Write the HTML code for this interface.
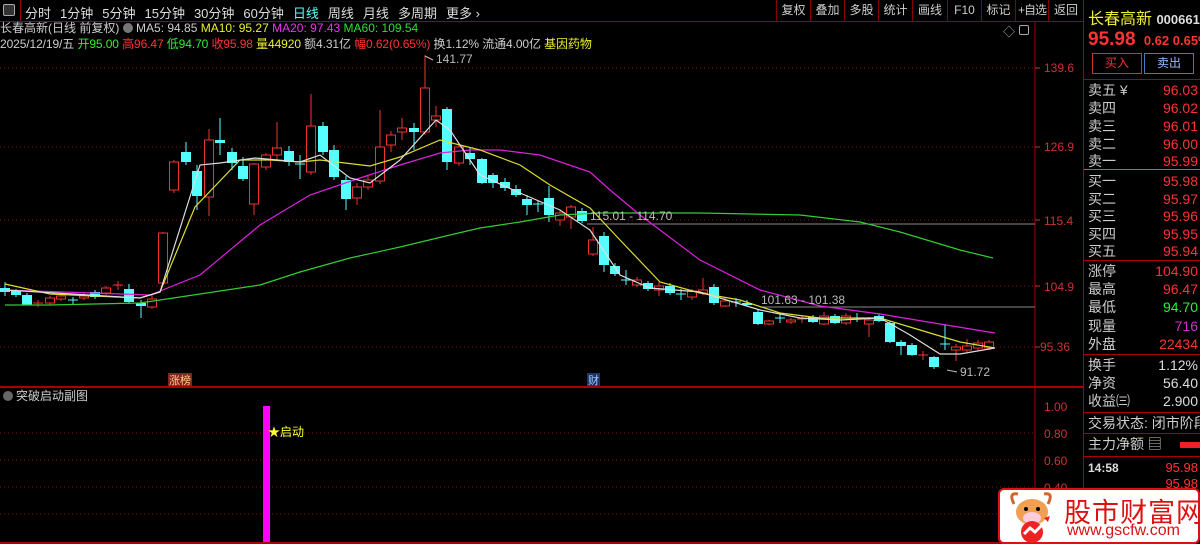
<!DOCTYPE html>
<html><head><meta charset="utf-8"><style>
*{margin:0;padding:0;box-sizing:border-box}
body{width:1200px;height:544px;background:#000;overflow:hidden;position:relative;font-family:"Liberation Sans","Noto Sans CJK SC",sans-serif;font-size:12px;color:#ccc}
.a{position:absolute;white-space:nowrap}
.tb span{margin-right:9px}
.btn{position:absolute;top:0;height:22px;border-left:1px solid #800;color:#ccc;font-size:12px;line-height:20px;text-align:center;white-space:nowrap;overflow:hidden}
.rp{position:absolute;left:1083px;top:0;width:117px;height:544px;border-left:1px solid #a00}
.row{position:absolute;left:4px;width:112px;font-size:14px;height:18px;line-height:18px}
.row b{position:absolute;right:2px;font-weight:normal;font-family:"Liberation Sans",sans-serif}
.sep{position:absolute;left:0;width:117px;height:1px;background:#a00}
</style></head><body>
<div class="a" style="left:0;top:0;width:1083px;height:22px;border-bottom:1px solid #900"></div>
<div class="a" style="left:3px;top:4px;width:12px;height:12px;border:1px solid #aaa;border-radius:2px;background:#333"></div>
<div class="a" style="left:20px;top:0;width:1px;height:22px;background:#900"></div>
<div class="a tb" style="left:25px;top:3px;font-size:13px;color:#ddd"><span>分时</span><span>1分钟</span><span>5分钟</span><span>15分钟</span><span>30分钟</span><span>60分钟</span><span style="color:#5ff">日线</span><span>周线</span><span>月线</span><span>多周期</span><span>更多 ›</span></div>
<div class="btn" style="left:776px;width:34px">复权</div>
<div class="btn" style="left:810px;width:34px">叠加</div>
<div class="btn" style="left:844px;width:34px">多股</div>
<div class="btn" style="left:878px;width:34px">统计</div>
<div class="btn" style="left:912px;width:35px">画线</div>
<div class="btn" style="left:947px;width:34px">F10</div>
<div class="btn" style="left:981px;width:34px">标记</div>
<div class="btn" style="left:1015px;width:33px;letter-spacing:-1px">+自选</div>
<div class="btn" style="left:1048px;width:35px">返回</div>
<div class="a" style="left:0;top:19px;font-size:12px"><span>长春高新(日线 前复权)</span> <span style="display:inline-block;width:10px;height:10px;border-radius:5px;background:#777;vertical-align:-1px"></span> <span>MA5: 94.85</span> <span style="color:#ee3">MA10: 95.27</span> <span style="color:#e3e">MA20: 97.43</span> <span style="color:#3d3">MA60: 109.54</span></div>
<div class="a" style="left:0;top:35px;font-size:12px;letter-spacing:-0.1px">2025/12/19/五 <span style="color:#3e3">开95.00</span> <span style="color:#f33">高96.47</span> <span style="color:#3e3">低94.70</span> <span style="color:#f33">收95.98</span> <span style="color:#ee3">量44920</span> 额4.31亿 <span style="color:#f33">幅0.62(0.65%)</span> 换1.12% 流通4.00亿 <span style="color:#ee3">基因药物</span></div>
<div class="a" style="left:1003px;top:23px;color:#aaa;font-size:12px">◇</div>
<div class="a" style="left:1019px;top:25px;width:10px;height:10px;border:1px solid #aaa;border-radius:2px"></div>
<svg class="a" style="left:0;top:0" width="1083" height="544" id="ch">
<g stroke="#7a1a1a" stroke-dasharray="1,3" stroke-width="1">
<line x1="0" y1="68" x2="1035" y2="68"/><line x1="0" y1="147" x2="1035" y2="147"/><line x1="0" y1="220" x2="1035" y2="220"/><line x1="0" y1="286" x2="1035" y2="286"/><line x1="0" y1="347" x2="1035" y2="347"/>
<line x1="0" y1="433" x2="1035" y2="433"/><line x1="0" y1="460" x2="1035" y2="460"/><line x1="0" y1="487" x2="1035" y2="487"/><line x1="0" y1="514" x2="1035" y2="514"/>
</g>
<line x1="1035" y1="22" x2="1035" y2="544" stroke="#a00"/>
<line x1="0" y1="387" x2="1083" y2="387" stroke="#a00" stroke-width="2"/>
<line x1="0" y1="543" x2="1083" y2="543" stroke="#a00" stroke-width="2"/>
<line x1="587" y1="224" x2="1035" y2="224" stroke="#888"/>
<line x1="760" y1="307" x2="1035" y2="307" stroke="#888"/>
<g fill="#c33" font-size="12" font-family="Liberation Sans,sans-serif">
<text x="1044" y="72">139.6</text><text x="1044" y="151">126.9</text><text x="1044" y="225">115.4</text><text x="1044" y="291">104.9</text><text x="1040" y="351">95.36</text>
<text x="1044" y="411">1.00</text><text x="1044" y="438">0.80</text><text x="1044" y="465">0.60</text><text x="1044" y="492">0.40</text>
</g>
<g stroke="#c33"><line x1="1035" y1="68" x2="1040" y2="68"/><line x1="1035" y1="147" x2="1040" y2="147"/><line x1="1035" y1="220" x2="1040" y2="220"/><line x1="1035" y1="286" x2="1040" y2="286"/><line x1="1035" y1="347" x2="1040" y2="347"/></g>
<g id="cd"></g>
<g fill="none" stroke-width="1.2">
<polyline stroke="#3c3" points="5,305 50,305 140,303 160,300 260,285 300,272 350,258 400,247 450,235 480,228 520,222 560,215 600,213 700,213 800,215 860,222 900,232 960,250 993,258"/>
<polyline stroke="#d2d" points="5,290 150,295 200,275 260,225 310,195 360,178 400,165 440,153 470,150 500,150 540,155 590,172 610,190 640,215 700,260 760,290 820,306 880,314 940,324 995,333"/>
<polyline stroke="#dd3" points="5,284 50,294 140,298 160,292 195,207 240,160 270,160 300,162 320,160 370,166 400,157 440,140 480,150 520,165 550,185 590,208 620,240 660,282 700,293 740,300 780,313 820,318 880,318 920,330 960,342 995,348"/>
<polyline stroke="#ddd" points="5,290 140,298 160,292 200,165 220,163 255,158 300,162 320,155 350,178 370,183 400,160 436,120 450,130 480,175 520,193 560,210 590,230 620,275 650,288 700,292 760,310 800,318 840,320 880,318 910,335 940,354 960,354 995,348"/>
</g>
<g fill="#bbb" font-size="12" font-family="Liberation Sans,sans-serif">
<text x="436" y="63">141.77</text><text x="590" y="220">115.01 - 114.70</text><text x="761" y="304">101.63 - 101.38</text><text x="960" y="376">91.72</text>
</g>
<path d="M425 56 l8 4 M947 370 l10 2" stroke="#bbb" fill="none"/>
<rect x="168" y="373" width="24" height="13" fill="#822"/><text x="169" y="384" fill="#fc8" font-size="11">涨榜</text>
<rect x="587" y="373" width="13" height="13" fill="#236"/><text x="588" y="384" fill="#9cf" font-size="11">财</text>
<circle cx="8" cy="396" r="5" fill="#666"/>
<text x="16" y="400" fill="#ccc" font-size="12">突破启动副图</text>
<rect x="263" y="406" width="7" height="136" fill="#f0f"/>
<text x="268" y="436" fill="#ff3" font-size="12">★启动</text>
</svg>
<div class="rp">
<div class="a" style="left:4px;top:5px;font-size:16px;color:#ee3">长春高新 <span style="font-size:13px;color:#ddd;font-weight:bold">000661</span></div>
<div class="a" style="left:4px;top:29px;font-size:19px;color:#f33;font-weight:bold">95.98 <span style="font-size:13px;margin-left:3px">0.62 0.65%</span></div>
<div class="a" style="left:8px;top:53px;width:50px;height:21px;border:1px solid #c33;color:#e33;text-align:center;line-height:19px;font-size:12px">买入</div>
<div class="a" style="left:60px;top:53px;width:50px;height:21px;border:1px solid #47b;color:#9bf;text-align:center;line-height:19px;font-size:12px">卖出</div>
<div class="sep" style="top:79px"></div>
<div class="row" style="top:81px">卖五 ¥<b style="color:#f33">96.03</b></div>
<div class="row" style="top:99px">卖四<b style="color:#f33">96.02</b></div>
<div class="row" style="top:117px">卖三<b style="color:#f33">96.01</b></div>
<div class="row" style="top:135px">卖二<b style="color:#f33">96.00</b></div>
<div class="row" style="top:152px">卖一<b style="color:#f33">95.99</b></div>
<div class="sep" style="top:169px;background:#a65"></div>
<div class="row" style="top:172px">买一<b style="color:#f33">95.98</b></div>
<div class="row" style="top:190px">买二<b style="color:#f33">95.97</b></div>
<div class="row" style="top:207px">买三<b style="color:#f33">95.96</b></div>
<div class="row" style="top:225px">买四<b style="color:#f33">95.95</b></div>
<div class="row" style="top:242px">买五<b style="color:#f33">95.94</b></div>
<div class="sep" style="top:260px"></div>
<div class="row" style="top:262px">涨停<b style="color:#f33">104.90</b></div>
<div class="row" style="top:280px">最高<b style="color:#f33">96.47</b></div>
<div class="row" style="top:298px">最低<b style="color:#3e3">94.70</b></div>
<div class="row" style="top:317px">现量<b style="color:#c3c">716</b></div>
<div class="row" style="top:335px">外盘<b style="color:#f33">22434</b></div>
<div class="sep" style="top:354px"></div>
<div class="row" style="top:356px">换手<b style="color:#ddd">1.12%</b></div>
<div class="row" style="top:374px">净资<b style="color:#ddd">56.40</b></div>
<div class="row" style="top:392px">收益㈢<b style="color:#ddd">2.900</b></div>
<div class="sep" style="top:412px"></div>
<div class="row" style="top:414px;width:140px">交易状态: 闭市阶段</div>
<div class="sep" style="top:433px"></div>
<div class="row" style="top:435px">主力净额 ▤<span style="position:absolute;left:92px;top:7px;width:22px;height:6px;background:#e22"></span></div>
<div class="sep" style="top:456px"></div>
<div class="row" style="top:459px;font-size:12px;color:#ddd;font-weight:bold">14:58<b style="color:#f33;font-size:13px">95.98</b></div>
<div class="row" style="top:475px;font-size:13px"><b style="color:#f33">95.98</b></div>
</div>
<div class="a" style="left:998px;top:488px;width:202px;height:56px;background:#fff;border:2px solid #d11;border-radius:6px"></div>
<svg class="a" style="left:1004px;top:490px" width="56" height="54">
<path d="M10 14 q-6 -12 4 -10 M44 14 q6 -12 -4 -10" stroke="#c63" stroke-width="3" fill="none"/>
<ellipse cx="28" cy="22" rx="16" ry="13" fill="#f0a050"/>
<ellipse cx="28" cy="28" rx="9" ry="6" fill="#fcd"/>
<circle cx="22" cy="19" r="2" fill="#000"/><circle cx="34" cy="19" r="2" fill="#000"/>
<circle cx="28" cy="42" r="11" fill="#e22"/>
<path d="M20 44 l6 -6 l5 4 l12 -12" stroke="#fff" stroke-width="3" fill="none"/>
<path d="M40 28 l6 -2 l-2 6z" fill="#e22"/>
</svg>
<div class="a" style="left:1064px;top:491px;font-size:27px;color:#d11;letter-spacing:1px">股市财富网</div>
<div class="a" style="left:1067px;top:522px;font-size:16px;color:#d11;font-family:'Liberation Sans',sans-serif">www.gscfw.com</div>
<script>
var d=[[5,288,292,282,296,0],[16,291,295,289,297,0],[27,295,305,293,305,0],[38,303,304,300,307,2],[50,298,303,296,305,1],[61,296,299,294,301,1],[73,300,301,297,305,2],[84,296,298,293,300,1],[95,292,297,290,299,0],[106,288,293,286,295,1],[118,285,286,281,290,2],[129,289,302,284,304,0],[141,303,306,300,318,0],[152,299,307,294,309,1],[163,233,283,232,285,1],[174,162,190,160,193,1],[186,152,162,142,165,0],[197,171,196,165,210,0],[209,140,197,129,216,1],[220,140,143,118,155,0],[232,152,163,148,170,0],[243,166,179,157,181,0],[254,164,204,163,215,1],[266,155,167,153,170,1],[277,148,155,122,160,1],[289,151,162,146,166,0],[300,164,166,155,179,2],[311,126,172,94,175,1],[323,126,152,122,155,0],[334,150,177,145,180,0],[346,180,199,176,210,0],[357,187,198,183,205,1],[368,180,187,175,190,1],[380,147,181,110,184,1],[391,135,145,131,152,1],[402,128,132,118,140,1],[414,128,132,123,150,0],[425,88,132,55,135,1],[436,116,120,106,127,1],[447,109,162,107,170,0],[459,147,163,145,166,1],[470,153,159,147,165,0],[482,159,183,158,184,0],[493,175,183,173,188,0],[505,182,188,178,191,0],[516,189,195,185,197,0],[527,199,205,195,215,0],[538,204,206,200,212,2],[549,198,215,186,222,0],[560,213,220,210,226,1],[571,207,217,205,229,1],[582,211,221,208,223,0],[593,240,254,227,256,1],[604,236,265,232,272,0],[615,266,274,263,276,0],[626,280,282,270,285,2],[637,280,285,277,287,1],[648,283,289,281,291,0],[659,286,290,282,296,1],[670,286,293,283,295,0],[681,294,296,289,300,2],[692,291,297,289,300,1],[703,290,293,278,295,1],[714,287,303,284,305,0],[725,301,306,298,307,1],[736,302,304,298,307,2],[747,303,305,300,306,0],[758,312,324,310,325,0],[769,321,324,320,325,1],[780,318,320,314,323,2],[791,320,322,318,324,1],[802,319,321,316,323,2],[813,317,322,315,323,0],[824,316,324,312,325,1],[835,316,323,314,324,0],[846,316,323,313,325,1],[857,318,320,313,322,2],[869,320,324,317,337,1],[879,316,321,314,322,0],[890,323,342,321,343,0],[901,342,346,340,355,0],[912,345,355,343,356,0],[923,355,357,351,360,2],[934,357,367,356,369,0],[945,344,346,324,350,2],[956,347,350,344,361,1],[967,346,350,339,352,1],[978,343,348,340,350,1],[989,342,348,340,350,1]];
var s='';d.forEach(function(c){var x=c[0],col=c[5]==1?'#e33':'#5ff';if(c[5]==2)col=(c[1]%2?'#e33':'#5ff');
s+='<line x1="'+x+'" y1="'+c[3]+'" x2="'+x+'" y2="'+c[4]+'" stroke="'+col+'"/>';
var h=Math.max(1,c[2]-c[1]);
if(c[5]==1)s+='<rect x="'+(x-4.5)+'" y="'+c[1]+'" width="9" height="'+h+'" fill="#000" stroke="'+col+'"/>';
else if(c[5]==0)s+='<rect x="'+(x-5)+'" y="'+c[1]+'" width="10" height="'+h+'" fill="'+col+'"/>';
else s+='<line x1="'+(x-5)+'" y1="'+c[1]+'" x2="'+(x+5)+'" y2="'+c[1]+'" stroke="'+col+'"/>';});
document.getElementById('cd').innerHTML=s;
</script>
</body></html>
